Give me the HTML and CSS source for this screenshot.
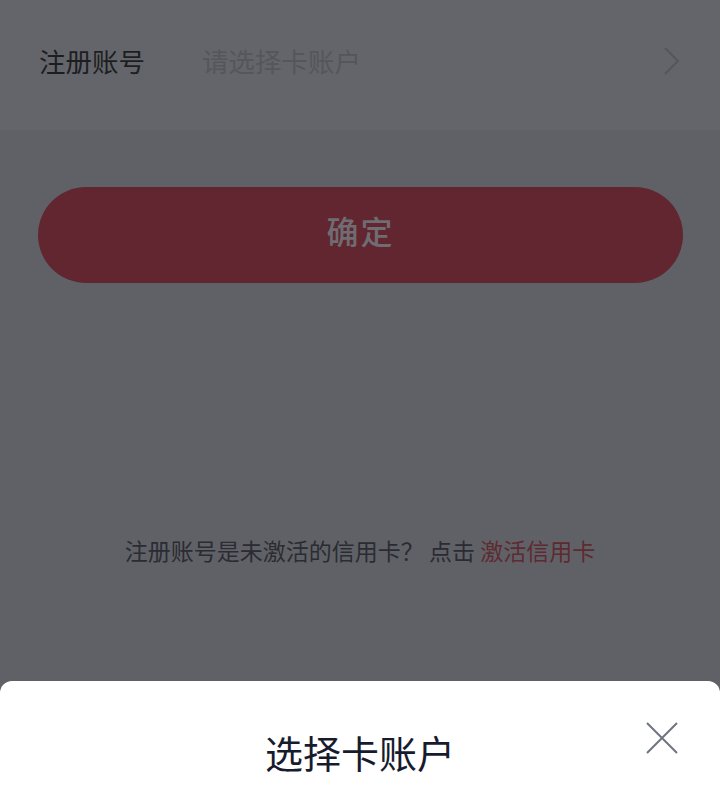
FILE: index.html
```html
<!DOCTYPE html>
<html lang="zh-CN">
<head>
    <meta charset="UTF-8">
    <meta name="viewport" content="width=device-width, initial-scale=1.0">
    <title>注册账号</title>
    <link rel="stylesheet" href="styles.css">
</head>
<body>
    <div class="page">
        <div class="field">
            <span class="field-label">注册账号</span>
            <span class="field-value">请选择卡账户</span>
            <svg class="chevron" width="20" height="30" viewBox="0 0 20 30">
                <path d="M3 2 L16 15 L3 28" fill="none" stroke="#55565b" stroke-width="2"/>
            </svg>
        </div>
        <div class="actions">
            <button class="confirm">确定</button>
        </div>
        <p class="hint">注册账号是未激活的信用卡？ 点击 <a class="hint-link">激活信用卡</a></p>
    </div>
    <div class="sheet">
        <div class="sheet-head">
            <h2 class="sheet-title">选择卡账户</h2>
            <svg class="close" width="34" height="34" viewBox="0 0 34 34">
                <path d="M2 2 L32 32 M32 2 L2 32" fill="none" stroke="#6e7480" stroke-width="2"/>
            </svg>
        </div>
    </div>
</body>
</html>
```

FILE: styles.css
```css
body {
    margin: 0;
    padding: 0;
    height: 795px;
    overflow: hidden;
    background-color: #606166;
    font-family: "Noto Sans CJK SC", "Noto Sans", sans-serif;
    display: flex;
    flex-direction: column;
}
.page {
    flex: 1;
}
.field {
    height: 120px;
    padding: 0 38px 10px 39px;
    background-color: #64656a;
    display: flex;
    align-items: center;
}
.field-label {
    width: 163px;
    font-size: 26.5px;
    color: #1d1e22;
}
.field-value {
    flex: 1;
    font-size: 26.5px;
    color: #55565b;
}
.chevron {
    margin-top: 2px;
}
.actions {
    padding: 57px 37px 0 38px;
}
.confirm {
    width: 100%;
    height: 96px;
    padding: 0 0 10px;
    border: none;
    border-radius: 48px;
    background-color: #612630;
    color: #6f6c72;
    font-family: inherit;
    font-size: 32px;
    font-weight: 500;
    letter-spacing: 2px;
}
.hint {
    margin: 250px 0 0;
    text-align: center;
    font-size: 23px;
    color: #2a2c33;
}
.hint-link {
    color: #5e2a31;
}
.sheet {
    height: 114px;
    background-color: #fff;
    border-radius: 12px 12px 0 0;
}
.sheet-head {
    position: relative;
    padding-top: 48px;
    text-align: center;
}
.sheet-title {
    margin: 0;
    font-size: 38px;
    font-weight: 400;
    line-height: 46px;
    color: #171b2e;
}
.close {
    position: absolute;
    right: 41px;
    top: 40px;
}
```
